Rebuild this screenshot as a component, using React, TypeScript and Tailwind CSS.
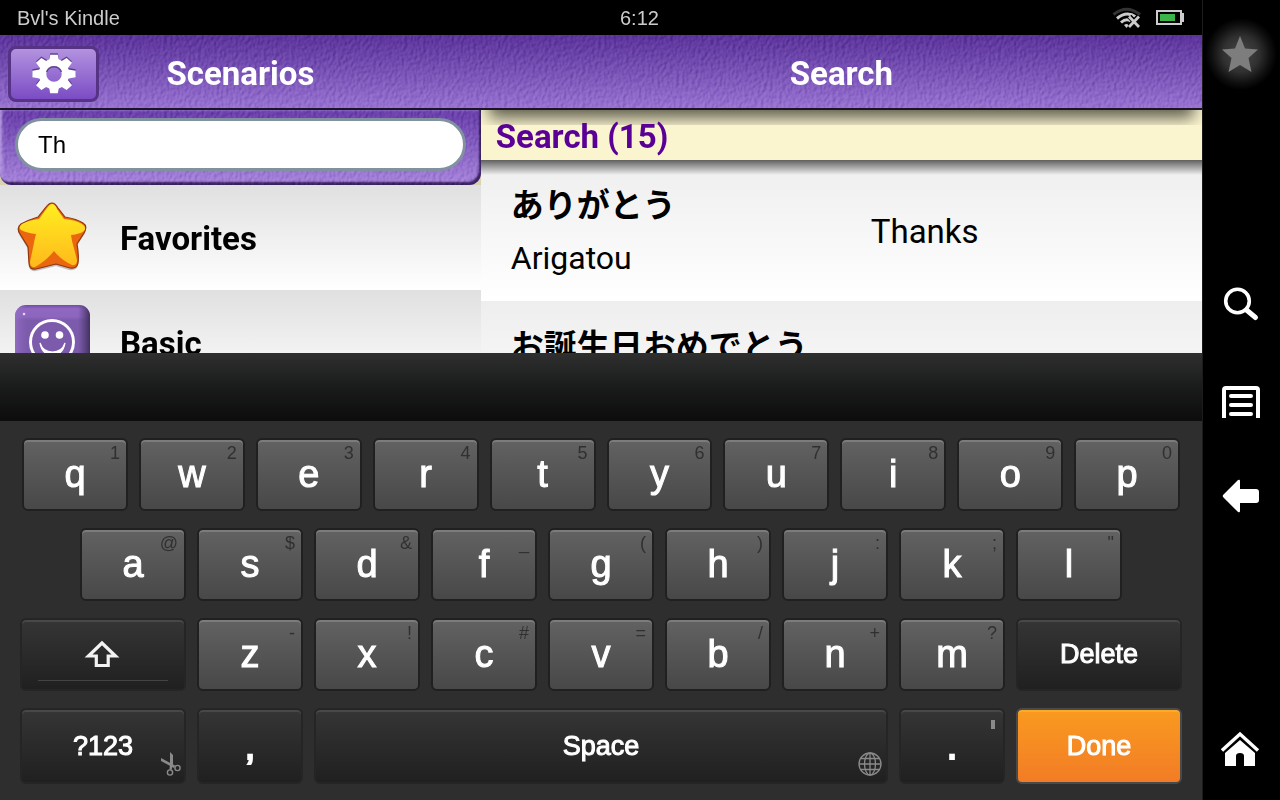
import { useState } from 'react';
import type { ReactNode } from 'react';

interface KeyDef {
  label: string;
  hint: string;
}

const ROW_ONE: KeyDef[] = [
  { label: 'q', hint: '1' },
  { label: 'w', hint: '2' },
  { label: 'e', hint: '3' },
  { label: 'r', hint: '4' },
  { label: 't', hint: '5' },
  { label: 'y', hint: '6' },
  { label: 'u', hint: '7' },
  { label: 'i', hint: '8' },
  { label: 'o', hint: '9' },
  { label: 'p', hint: '0' },
];

const ROW_TWO: KeyDef[] = [
  { label: 'a', hint: '@' },
  { label: 's', hint: '$' },
  { label: 'd', hint: '&' },
  { label: 'f', hint: '_' },
  { label: 'g', hint: '(' },
  { label: 'h', hint: ')' },
  { label: 'j', hint: ':' },
  { label: 'k', hint: ';' },
  { label: 'l', hint: '"' },
];

const ROW_THREE: KeyDef[] = [
  { label: 'z', hint: '-' },
  { label: 'x', hint: '!' },
  { label: 'c', hint: '#' },
  { label: 'v', hint: '=' },
  { label: 'b', hint: '/' },
  { label: 'n', hint: '+' },
  { label: 'm', hint: '?' },
];

const RESULTS = [
  { kana: 'ありがとう', romaji: 'Arigatou', english: 'Thanks' },
  { kana: 'お誕生日おめでとう', romaji: '', english: '' },
];

// Embossed leather grain laid over the purple bars
function Grain({ id }: { id: string }) {
  return (
    <svg className="pointer-events-none absolute inset-0 h-full w-full opacity-40 mix-blend-soft-light" aria-hidden="true">
      <filter id={id} x="0" y="0" width="100%" height="100%" colorInterpolationFilters="sRGB">
        <feTurbulence type="fractalNoise" baseFrequency="0.32 0.24" numOctaves="2" seed="4" />
        <feDiffuseLighting surfaceScale="1.8" diffuseConstant="0.72" lightingColor="#ffffff">
          <feDistantLight azimuth="215" elevation="42" />
        </feDiffuseLighting>
      </filter>
      <rect width="100%" height="100%" filter={`url(#${id})`} />
    </svg>
  );
}

function GearIcon() {
  const teeth = [0, 45, 90, 135, 180, 225, 270, 315];
  return (
    <svg width="46" height="42" viewBox="-23 -21 46 42" aria-hidden="true">
      <g fill="#3f2470" opacity="0.7" transform="translate(0 -1.5)">
        {teeth.map((a) => (
          <path key={a} d="M-5-12L-3.5-20H3.5L5-12Z" transform={`scale(1.08 .96) rotate(${a})`} />
        ))}
      </g>
      <g fill="#fff">
        {teeth.map((a) => (
          <path key={a} d="M-5-12L-3.5-20H3.5L5-12Z" transform={`scale(1.08 .96) rotate(${a})`} />
        ))}
      </g>
      <circle r="11.5" fill="none" stroke="#fff" strokeWidth="7.5" />
      <path d="M-7.5-2A8 8 0 0 1 7.5-2" fill="none" stroke="#3f2470" strokeWidth="1.5" opacity="0.7" />
    </svg>
  );
}

function WifiOffIcon() {
  return (
    <svg width="30" height="22" viewBox="0 0 30 22" fill="none" aria-hidden="true">
      <path d="M1.500 7.500Q14.500-3 28 7.500" stroke="#333" strokeWidth="3" />
      <path d="M5 11.500Q14.500 3.500 24 10" stroke="#ccc" strokeWidth="3" />
      <path d="M9 15.500Q14 11 19 14" stroke="#ccc" strokeWidth="3" />
      <path d="M12 18Q14.500 16 17 18L14.500 21Z" fill="#ccc" />
      <path d="M17.500 9.500L26.500 19.500M26.500 9.500L17.500 19.500" stroke="#000" strokeWidth="5" />
      <path d="M17 9.500L27 20M27 9.500L17 20" stroke="#ccc" strokeWidth="2.800" />
    </svg>
  );
}

function BatteryIcon() {
  return (
    <svg width="28" height="15" viewBox="0 0 28 15" aria-hidden="true">
      <rect x="1" y="1" width="24" height="13" fill="none" stroke="#ccc" strokeWidth="2" />
      <rect x="25" y="3" width="3" height="9" fill="#ccc" />
      <rect x="4" y="4" width="15" height="7" fill="#39b54a" />
    </svg>
  );
}

function FavoriteIcon() {
  return (
    <svg width="75" height="75" viewBox="0 0 75 75" aria-hidden="true">
      <defs>
        <linearGradient id="gold" x1="0" y1="0" x2="0" y2="1">
          <stop offset="0" stopColor="#ffee20" />
          <stop offset="1" stopColor="#ffb91c" />
        </linearGradient>
      </defs>
      <path
        d="M37 3Q40 3 43 8L50 18Q62 20 69 24Q73 27 69 34L62 44Q64 55 63 64Q62 70 54 69L41 65L21 70Q14 71 14 64L13 48L5 35Q1 28 6 25Q13 21 23 18L31 7Q34 3 37 3Z"
        fill="#555"
        opacity="0.35"
        transform="translate(0 1)"
      />
      <path
        d="M37 3Q40 3 43 8L50 17Q62 19 68 23Q73 26 69 33L62 44Q64 55 63 63Q62 69 55 68L41 64L21 69Q14 70 14 63L13 47L5 34Q1 28 6 24Q13 20 23 17L31 7Q34 3 37 3Z"
        fill="#ea6710"
        stroke="#8f3510"
        strokeWidth="1.200"
      />
      <path
        d="M37 4Q40 4 42 9L49 19Q61 20 67 24Q72 27 69 31Q65 34 56 35L57 41Q60 52 62 60Q62 66 57 65Q46 60 39 51Q31 61 20 67Q15 68 15 62Q18 48 20 38L21 34Q12 33 6 30Q3 27 7 24Q14 20 24 19L32 8Q35 4 37 4Z"
        fill="url(#gold)"
      />
    </svg>
  );
}

function BasicIcon() {
  return (
    <svg width="75" height="75" viewBox="0 0 75 75" aria-hidden="true">
      <defs>
        <linearGradient id="tileTop" x1="0" y1="0" x2="0" y2="1">
          <stop offset="0" stopColor="#7149a8" />
          <stop offset=".05" stopColor="#9068c2" />
          <stop offset=".16" stopColor="#8c65bd" />
          <stop offset=".2" stopColor="#7d5bac" />
        </linearGradient>
        <linearGradient id="tileSide" x1="0" y1="0" x2="1" y2="0">
          <stop offset="0" stopColor="#9570c5" stopOpacity=".8" />
          <stop offset=".16" stopColor="#8c65bd" stopOpacity="0" />
          <stop offset=".84" stopColor="#4c3a72" stopOpacity="0" />
          <stop offset="1" stopColor="#43305f" />
        </linearGradient>
      </defs>
      <rect width="75" height="75" rx="11" fill="url(#tileTop)" />
      <rect width="75" height="75" rx="11" fill="url(#tileSide)" />
      <circle cx="9" cy="9" r="1.300" fill="#e6d4ff" />
      <circle cx="37" cy="37" r="21.500" fill="none" stroke="#fff" strokeWidth="3" />
      <circle cx="30" cy="30" r="3.800" fill="#fff" />
      <circle cx="44.500" cy="30" r="3.800" fill="#fff" />
      <path d="M25 38Q27 50 37.500 50T50 38Q47 47 37.500 47T25 38Z" fill="#fff" stroke="#fff" strokeWidth="1.200" />
    </svg>
  );
}

function ShiftIcon() {
  return (
    <svg width="38" height="30" viewBox="0 0 38 30" aria-hidden="true">
      <path d="M18 3L4.500 16H12.300V25.500H24.200V16H31.500Z" fill="none" stroke="#f2f2f2" strokeWidth="3.200" />
    </svg>
  );
}

function ScissorsIcon() {
  return (
    <svg width="22" height="24" viewBox="0 0 22 24" fill="none" aria-hidden="true">
      <path d="M1 6L15 13.500L14 16L1 9ZM10 0L13 3V12L11.500 18L9.500 17.500L10 11Z" fill="#8a8a8a" />
      <circle cx="17.500" cy="16" r="2.600" stroke="#8a8a8a" strokeWidth="1.400" />
      <circle cx="10" cy="20.500" r="2.600" stroke="#8a8a8a" strokeWidth="1.400" />
    </svg>
  );
}

function GlobeIcon() {
  return (
    <svg width="24" height="24" viewBox="0 0 24 24" fill="none" stroke="#8a8a8a" strokeWidth="1.300" aria-hidden="true">
      <circle cx="12" cy="12" r="11" />
      <ellipse cx="12" cy="12" rx="5.500" ry="11" />
      <path d="M12 1V23M1 12H23M3 6.500H21M3 17.500H21" />
    </svg>
  );
}

interface KeyProps {
  children: ReactNode;
  name: string;
  onPress?: () => void;
  className: string;
}

// Dark function key: shift, delete, space and the bottom row
function DarkKey({ children, name, onPress, className }: KeyProps) {
  return (
    <button
      type="button"
      aria-label={name}
      onClick={onPress}
      className={`relative flex items-center justify-center rounded-md border-2 border-[#252525] bg-linear-to-b from-[#353535] to-[#202020] text-white shadow-[inset_0_2px_0_#484848] ${className}`}
    >
      {children}
    </button>
  );
}

function LetterKey({ label, hint, onPress }: KeyDef & { onPress: (s: string) => void }) {
  return (
    <button
      type="button"
      aria-label={label}
      onClick={() => onPress(label)}
      className="relative flex h-[73px] min-w-0 flex-1 justify-center rounded-md border-2 border-[#202020] bg-linear-to-b from-[#626262] to-[#484848] pt-3 text-[38px] leading-11 text-white shadow-[inset_0_2px_0_#7c7c7c] [-webkit-text-stroke:1px_white]"
    >
      {label}
      <span className="absolute top-px right-1.5 text-lg leading-6 text-[#303030] [-webkit-text-stroke:0px]">{hint}</span>
    </button>
  );
}

function SideNav() {
  return (
    <nav className="flex w-[78px] shrink-0 flex-col items-center border-l border-[#1c1c1c] bg-black pr-px">
      <button
        type="button"
        aria-label="Favorite"
        className="mt-4 flex h-[76px] w-full items-center justify-center bg-[radial-gradient(circle_at_center,#484848_0,#303030_18px,#101010_29px,#000_36px)]"
      >
        <svg width="38" height="38" viewBox="0 0 38 38" aria-hidden="true">
          <path d="M18 1L23 13.500L36 14.500L26.500 23L29.500 37L18 30L6.500 37L9.500 23L0 14.500L13 13.500Z" fill="#7d7d7d" />
        </svg>
      </button>
      <button type="button" aria-label="Search" className="mt-48 flex h-10 w-full items-center justify-center">
        <svg width="40" height="40" viewBox="0 0 40 40" fill="none" stroke="#fff" aria-hidden="true">
          <circle cx="16.500" cy="17" r="11.800" strokeWidth="3.600" />
          <path d="M25.500 26L34.500 33.500" strokeWidth="5" strokeLinecap="round" />
        </svg>
      </button>
      <button type="button" aria-label="Menu" className="mt-[58px] flex h-10 w-full items-center justify-center">
        <svg width="38" height="32" viewBox="0 0 38 32" fill="none" stroke="#fff" strokeWidth="4" aria-hidden="true">
          <path d="M2 32V4Q2 2 4 2H34Q36 2 36 4V32" />
          <path d="M9 10H29M9 19H29M9 28H29" strokeLinecap="round" />
        </svg>
      </button>
      <button type="button" aria-label="Back" className="mt-[54px] flex h-10 w-full items-center justify-center">
        <svg width="38" height="34" viewBox="0 0 38 34" fill="#fff" aria-hidden="true">
          <path d="M1.500 15.500L16 1Q18 0 18 2V10H34Q37 10 37 13V21Q37 24 34 24H18V32Q18 34 16 33L1.500 18.500Q0 17 1.500 15.500Z" />
        </svg>
      </button>
      <button type="button" aria-label="Home" className="mt-auto mb-8 flex h-10 w-full items-center justify-center">
        <svg width="40" height="36" viewBox="0 0 40 36" aria-hidden="true">
          <path d="M1 20.500L19 4L37 20.500" fill="none" stroke="#fff" strokeWidth="3.400" />
          <path d="M19 10L34 23V36H23V26Q23 23 19 23T15 26V36H4V23Z" fill="#fff" />
        </svg>
      </button>
    </nav>
  );
}

export default function App() {
  const [query, setQuery] = useState('Th');

  const press = (s: string) => setQuery((q) => q + s);

  return (
    <div className="flex h-screen overflow-hidden bg-black font-['Roboto','Noto_Sans_CJK_JP',sans-serif]">
      <div className="flex min-w-0 flex-1 flex-col">
        {/* Status bar */}
        <div className="grid h-[35px] shrink-0 grid-cols-3 items-center bg-black pr-[18px] pl-[17px] font-['Liberation_Sans',sans-serif] text-xl text-[#ccc]">
          <span>Bvl&apos;s Kindle</span>
          <span className="pl-[214px]">6:12</span>
          <span className="flex items-center justify-end gap-3.5">
            <WifiOffIcon />
            <BatteryIcon />
          </span>
        </div>

        {/* Title bar */}
        <header className="relative flex h-[75px] shrink-0 border-b-2 border-[#1b1426] bg-linear-to-b from-[#5d339c] to-[#9a74d2]">
          <Grain id="grain-title" />
          <div className="relative flex w-2/5 items-center justify-center">
            <button
              type="button"
              aria-label="Settings"
              className="absolute top-[11px] left-2 flex h-14 w-[91px] items-center justify-center rounded-lg border-3 border-[#563384] bg-linear-to-b from-[#b392df] to-[#7c4bc4]"
            >
              <GearIcon />
            </button>
            <h1 className="pt-1 text-[33px] leading-10 font-bold text-white">Scenarios</h1>
          </div>
          <h1 className="relative flex-1 self-center pt-1 text-center text-[33px] leading-10 font-bold text-white">Search</h1>
        </header>

        <main className="flex min-h-0 flex-1 overflow-hidden">
          <section className="flex w-2/5 flex-col bg-[#d9d3b0]">
            <div className="relative shrink-0 overflow-hidden rounded-b-xl bg-linear-to-b from-[#6a3eab] to-[#a986dc] px-[15px] py-2 shadow-[inset_-2px_-3px_2px_#3a2260,inset_2px_0_3px_#b59ae0]">
              <Grain id="grain-search" />
              <input
                id="query"
                type="text"
                aria-label="Search phrases"
                value={query}
                onChange={(e) => setQuery(e.target.value)}
                className="relative mb-1.5 block h-[53px] w-full rounded-full border-3 border-[#8191a0] bg-white px-5 font-['Liberation_Sans',sans-serif] text-2xl text-black outline-none"
              />
            </div>
            <ul>
              <li className="flex h-[105px] items-center gap-[30px] bg-linear-to-b from-[#e0e0e0] to-white pl-[15px]">
                <FavoriteIcon />
                <a href="#favorites" className="pt-0.5 text-[33px] leading-10 font-bold text-black">
                  Favorites
                </a>
              </li>
              <li className="flex h-[105px] items-center gap-[30px] bg-linear-to-b from-[#e0e0e0] to-white pl-[15px]">
                <BasicIcon />
                <a href="#basic" className="pt-0.5 text-[33px] leading-10 font-bold text-black">
                  Basic
                </a>
              </li>
            </ul>
          </section>

          <section className="min-w-0 flex-1 overflow-hidden bg-white">
            <div className="relative h-[50px] bg-[#fbf5cf] px-[15px]">
              <div className="absolute inset-x-0 top-0 h-[15px] overflow-hidden">
                <div className="mx-4 -mt-5 h-5 shadow-[0_0_16px_8px_#000000a0]" />
              </div>
              <h2 className="relative pt-[7px] text-[33px] leading-10 font-bold text-[#5a0096]">Search (15)</h2>
            </div>
            <div className="relative">
              <div className="absolute inset-x-0 top-0 h-[15px] bg-linear-to-b from-[#00000099] to-transparent" />
              <ul>
                {RESULTS.map((r) => (
                  <li key={r.kana} className="flex h-[141px] items-center bg-linear-to-b from-[#eee] to-white pl-[30px] text-black">
                    <div className="w-[360px] shrink-0 pt-1.5">
                      <p lang="ja" className="text-[33px] leading-12 font-bold whitespace-nowrap">
                        {r.kana}
                      </p>
                      <p className="h-14 pt-1 text-[32px] leading-12">{r.romaji}</p>
                    </div>
                    <p className="pt-0.5 text-[33px] leading-10 whitespace-nowrap">{r.english}</p>
                  </li>
                ))}
              </ul>
            </div>
          </section>
        </main>

        {/* Suggestion strip */}
        <div className="h-[68px] shrink-0 bg-linear-to-b from-[#2f2f2f] via-[#1a1c1b] to-[#0c0c0c]" />

        {/* Keyboard */}
        <div className="flex shrink-0 flex-col gap-[17px] bg-[#2e2e2e] px-5 pt-[17px] pb-4 font-['Liberation_Sans',sans-serif]">
          <div className="flex gap-[11px] px-0.5">
            {ROW_ONE.map((k) => (
              <LetterKey key={k.label} {...k} onPress={press} />
            ))}
          </div>
          <div className="flex gap-[11px] px-[60px]">
            {ROW_TWO.map((k) => (
              <LetterKey key={k.label} {...k} onPress={press} />
            ))}
          </div>
          <div className="flex gap-[11px]">
            <DarkKey name="Shift" className="w-[166px]">
              <ShiftIcon />
              <span className="absolute inset-x-4 bottom-2 h-px bg-[#444]" />
            </DarkKey>
            {ROW_THREE.map((k) => (
              <LetterKey key={k.label} {...k} onPress={press} />
            ))}
            <DarkKey
              name="Delete"
              onPress={() => setQuery((q) => q.slice(0, -1))}
              className="w-[166px] text-[27px] [-webkit-text-stroke:1px_white]"
            >
              Delete
            </DarkKey>
          </div>
          <div className="flex h-[76px] gap-[11px]">
            <DarkKey name="?123" className="w-[166px] text-[27px] [-webkit-text-stroke:1px_white]">
              ?123
              <span className="absolute right-0.5 bottom-1.5">
                <ScissorsIcon />
              </span>
            </DarkKey>
            <DarkKey name="," onPress={() => press(',')} className="w-[106px] text-[38px] [-webkit-text-stroke:2px_white]">
              ,
            </DarkKey>
            <DarkKey
              name="Space"
              onPress={() => press(' ')}
              className="flex-1 text-[27px] [-webkit-text-stroke:1px_white]"
            >
              Space
              <span className="absolute right-1 bottom-1.5">
                <GlobeIcon />
              </span>
            </DarkKey>
            <DarkKey name="." onPress={() => press('.')} className="w-[106px] text-[38px] [-webkit-text-stroke:2px_white]">
              .
              <span className="absolute top-2.5 right-2 h-[9px] w-1 bg-[#8a8a8a]" />
            </DarkKey>
            <button
              type="button"
              className="w-[166px] rounded-md border-2 border-[#4a4a4a] bg-linear-to-b from-[#f99a1f] to-[#f27c25] text-[27px] text-white shadow-[inset_0_2px_0_#fbab2b] [-webkit-text-stroke:1px_white]"
            >
              Done
            </button>
          </div>
        </div>
      </div>

      <SideNav />
    </div>
  );
}
